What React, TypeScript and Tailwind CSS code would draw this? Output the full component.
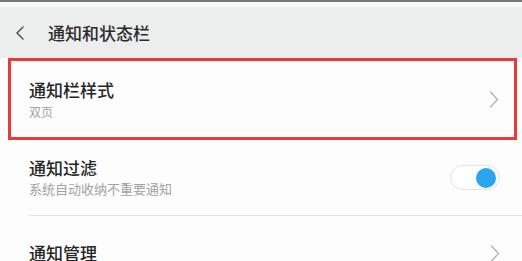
import React from "react";

const font = {
  fontFamily: '"Noto Sans CJK SC", "Noto Sans", sans-serif',
};

function ChevronRight() {
  return (
    <svg width="10" height="17" viewBox="0 0 10 17" fill="none">
      <polyline
        points="1.5,1 8.5,8.5 1.5,16"
        stroke="#b4b4b4"
        strokeWidth="1.4"
        strokeLinecap="round"
        strokeLinejoin="round"
      />
    </svg>
  );
}

function Toggle() {
  return (
    <div className="flex h-[25px] w-[50px] items-center justify-end rounded-full border border-[#e3e3e3] bg-white pr-[3px]">
      <div className="h-[20px] w-[20px] rounded-full bg-[#2ba6ee]" />
    </div>
  );
}

export default function App() {
  return (
    <div
      className="h-[261px] w-[522px] overflow-hidden bg-[#fdfdfd]"
      style={font}
    >
      <div className="h-[2px] bg-[#777777]" />
      <div className="h-[5px] bg-[#f7f7f7]" />
      <div className="flex h-[51px] items-center bg-[#eceeee] pl-[15px] pr-[3px]">
        <svg width="10" height="14" viewBox="0 0 10 14" fill="none">
          <polyline
            points="8,1 2,7 8,13"
            stroke="#555555"
            strokeWidth="1.5"
            strokeLinecap="round"
            strokeLinejoin="round"
          />
        </svg>
        <span className="ml-[23px] text-[17px] font-medium leading-[22px] text-[#2b2b2b]">
          通知和状态栏
        </span>
      </div>

      <div className="ml-[8px] mr-[5px] flex h-[82px] items-center border-[3px] border-[#e8393b] pl-[18px] pr-[15px]">
        <div className="flex flex-1 flex-col">
          <span className="text-[17px] font-medium leading-[22px] text-[#262626]">
            通知栏样式
          </span>
          <span className="mt-[3px] text-[12px] leading-[16px] text-[#a2a2a2]">
            双页
          </span>
        </div>
        <ChevronRight />
      </div>

      <div className="flex h-[75px] items-center pl-[29px] pr-[22px]">
        <div className="flex flex-1 flex-col">
          <span className="text-[17px] font-medium leading-[22px] text-[#262626]">
            通知过滤
          </span>
          <span className="mt-[1px] text-[13px] leading-[18px] text-[#a2a2a2]">
            系统自动收纳不重要通知
          </span>
        </div>
        <Toggle />
      </div>

      <div className="ml-[29px] h-px bg-[#e4e4e4]" />

      <div className="flex h-[74px] items-center pl-[29px] pr-[22px]">
        <span className="flex-1 text-[17px] font-medium leading-[22px] text-[#262626]">
          通知管理
        </span>
        <ChevronRight />
      </div>
    </div>
  );
}
